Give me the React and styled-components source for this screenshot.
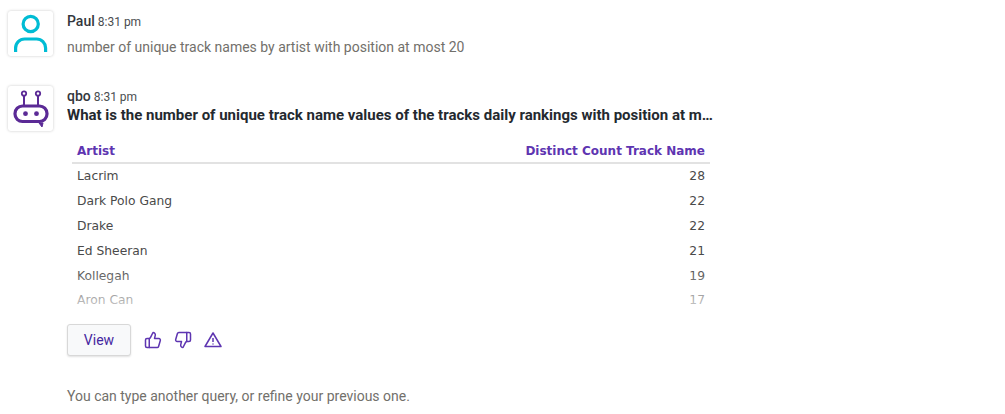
import styled, { createGlobalStyle } from 'styled-components';
import { LuThumbsUp, LuThumbsDown } from 'react-icons/lu';

const GlobalStyle = createGlobalStyle`
  html, body {
    margin: 0;
    padding: 0;
    background: #fff;
    font-family: Roboto, "Liberation Sans", sans-serif;
    overflow: hidden;
  }
`;

const Page = styled.div`
  width: 1005px;
  height: 414px;
  padding: 11px 0 0 8px;
  box-sizing: border-box;
`;

const Message = styled.div`
  display: flex;
  gap: 14px;
  margin-bottom: ${(p) => p.$gap || 0}px;
`;

const Avatar = styled.div`
  width: 45px;
  height: 45px;
  flex: none;
  background: #fff;
  border-radius: 3px;
  box-shadow: 0 0 3px rgba(0, 0, 0, 0.22);
  display: flex;
  align-items: center;
  justify-content: center;
`;

const Body = styled.div`
  width: 646px;
  min-width: 0;
`;

const Head = styled.div`
  height: ${(p) => p.$height || 22}px;
  line-height: 20px;
  color: #33373d;
`;

const Name = styled.span`
  font-size: 14px;
  font-weight: 500;
  margin-right: 3px;
`;

const Time = styled.span`
  font-size: 12px;
  color: #4a4d50;
`;

const Plain = styled.div`
  margin-top: 4px;
  font-size: 14px;
  line-height: 20px;
  color: #72706b;
`;

const Title = styled.div`
  font-size: 15px;
  font-weight: 700;
  line-height: 18px;
  color: #24292f;
  white-space: nowrap;
  overflow: hidden;
  text-overflow: ellipsis;
`;

const TableWrap = styled.div`
  position: relative;
  margin: 15px 0 0 5px;
  width: 638px;
  height: 177px;
  overflow: hidden;
`;

const Fade = styled.div`
  position: absolute;
  left: 0;
  right: 0;
  bottom: 0;
  height: 50px;
  background: linear-gradient(rgba(255, 255, 255, 0), rgba(255, 255, 255, 0.85));
`;

const Table = styled.table`
  width: 100%;
  border-collapse: collapse;
  font-family: "DejaVu Sans", sans-serif;
  font-size: 12.3px;
`;

const Th = styled.th`
  height: 23px;
  padding: 0 5px;
  font-size: 12px;
  text-align: ${(p) => (p.$right ? 'right' : 'left')};
  color: #5e35b1;
  font-weight: 700;
  border-bottom: 2px solid #e2e2e2;
`;

const Td = styled.td`
  height: 22.8px;
  padding: 1px 5px;
  line-height: 14px;
  text-align: ${(p) => (p.$right ? 'right' : 'left')};
  color: #4a4a4a;
`;

const Actions = styled.div`
  display: flex;
  align-items: center;
  gap: 12px;
  margin-top: 8px;
`;

const ViewButton = styled.button`
  width: 64px;
  height: 32px;
  margin-right: 1px;
  padding: 0;
  background: #f8f9fa;
  border: 1px solid #d8d8d8;
  border-radius: 3px;
  box-shadow: 0 1px 2px rgba(0, 0, 0, 0.12);
  color: #4527a0;
  font-family: Roboto, sans-serif;
  font-size: 14px;
`;

const IconRow = styled.div`
  display: flex;
  align-items: center;
  gap: 12px;
  color: #5e35b1;
  font-size: 18px;
`;

const Footer = styled.div`
  margin-top: 30px;
  padding-left: 59px;
  font-size: 14px;
  line-height: 20px;
  color: #72706b;
`;

const rows = [
  ['Lacrim', 28],
  ['Dark Polo Gang', 22],
  ['Drake', 22],
  ['Ed Sheeran', 21],
  ['Kollegah', 19],
  ['Aron Can', 17],
];

const UserIcon = () => (
  <svg width="37" height="39" viewBox="0 0 37 39" fill="none" stroke="#00bcd4" strokeWidth="3.2">
    <circle cx="18.7" cy="10" r="7.6" />
    <path d="M3.6 38v-4a9 9 0 0 1 9-9h12a9 9 0 0 1 9 9v4" />
  </svg>
);

const BotIcon = () => (
  <svg width="38" height="38" viewBox="0 0 38 38" fill="none" stroke="#5b2a96">
    <circle cx="12" cy="3.5" r="2.2" strokeWidth="1.8" />
    <circle cx="26" cy="3.5" r="2.2" strokeWidth="1.8" />
    <path d="M12 6v9M26 6v9" strokeWidth="2" />
    <rect x="3" y="16" width="32" height="15.5" rx="7.5" strokeWidth="3.2" />
    <circle cx="13.5" cy="23.7" r="2.4" fill="#5b2a96" stroke="none" />
    <circle cx="24.5" cy="23.7" r="2.4" fill="#5b2a96" stroke="none" />
    <path d="M27 33l3 4 1-4z" fill="#5b2a96" strokeWidth="1" />
  </svg>
);

const WarnIcon = () => (
  <svg width="18" height="18" viewBox="0 0 18 18" fill="none" stroke="currentColor" strokeWidth="1.5" strokeLinejoin="round">
    <path d="M9 2 L17 15.5 H1 Z" />
    <path d="M9 7v4M9 12.6v1" />
  </svg>
);

export default function App() {
  return (
    <Page>
      <GlobalStyle />
      <Message $gap={29}>
        <Avatar>
          <UserIcon />
        </Avatar>
        <Body>
          <Head>
            <Name>Paul</Name>
            <Time>8:31 pm</Time>
          </Head>
          <Plain>number of unique track names by artist with position at most 20</Plain>
        </Body>
      </Message>
      <Message>
        <Avatar>
          <BotIcon />
        </Avatar>
        <Body>
          <Head $height={20}>
            <Name>qbo</Name>
            <Time>8:31 pm</Time>
          </Head>
          <Title>
            What is the number of unique track name values of the tracks daily rankings with position at most 20 by artist?
          </Title>
          <TableWrap>
            <Table>
              <thead>
                <tr>
                  <Th>Artist</Th>
                  <Th $right>Distinct Count Track Name</Th>
                </tr>
              </thead>
              <tbody>
                {rows.map(([artist, count]) => (
                  <tr key={artist}>
                    <Td>{artist}</Td>
                    <Td $right>{count}</Td>
                  </tr>
                ))}
              </tbody>
            </Table>
            <Fade />
          </TableWrap>
          <Actions>
            <ViewButton>View</ViewButton>
            <IconRow>
              <LuThumbsUp />
              <LuThumbsDown />
              <WarnIcon />
            </IconRow>
          </Actions>
        </Body>
      </Message>
      <Footer>You can type another query, or refine your previous one.</Footer>
    </Page>
  );
}
